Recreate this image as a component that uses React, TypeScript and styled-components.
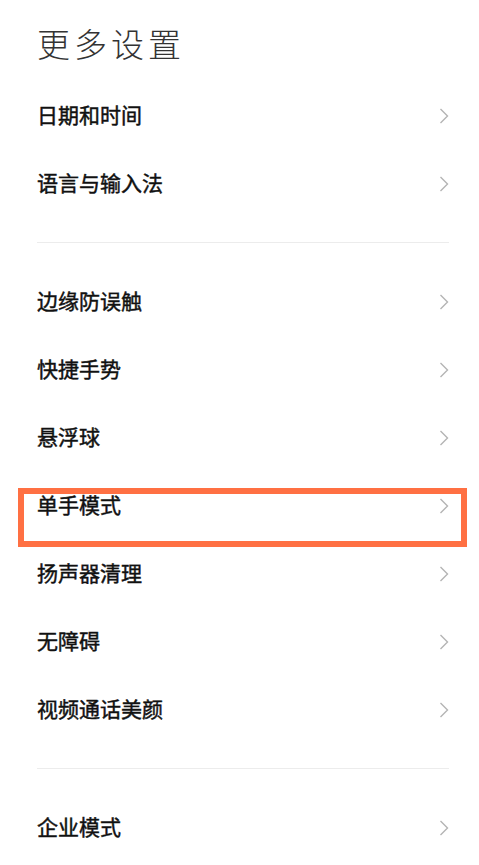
import styled, { createGlobalStyle } from 'styled-components';

const GlobalStyle = createGlobalStyle`
  html, body {
    margin: 0;
    padding: 0;
    background: #fff;
  }
  body {
    font-family: "Noto Sans CJK SC", "Noto Sans", sans-serif;
  }
`;

const Page = styled.div`
  width: 479px;
  height: 865px;
  overflow: hidden;
  padding: 0 30px 0 37px;
  box-sizing: border-box;
  background: #fff;
`;

const Title = styled.h1`
  margin: 0 0 21px;
  padding-top: 25px;
  font-size: 33px;
  line-height: 36px;
  font-weight: 300;
  letter-spacing: 4px;
  color: #333;
`;

const List = styled.ul`
  margin: 0;
  padding: 0;
  list-style: none;
`;

const Row = styled.li`
  position: relative;
  height: 68px;
  display: flex;
  align-items: center;
  justify-content: space-between;
`;

const Label = styled.span`
  font-size: 21px;
  line-height: 24px;
  padding-bottom: 4px;
  font-weight: 400;
  -webkit-text-stroke: 0.45px #111;
  color: #111;
`;

const Divider = styled.div`
  height: 1px;
  background: #ececec;
  margin: 24px 0 25px;
`;

const Highlight = styled.div`
  position: absolute;
  top: 16px;
  left: -19px;
  width: 449px;
  height: 59px;
  box-sizing: border-box;
  border: 6px solid #ff7043;
  pointer-events: none;
`;

const Chevron = () => (
  <svg width='10' height='16' viewBox='0 0 10 16' fill='none'>
    <path d='M1.5 1 L8.5 8 L1.5 15' stroke='#b4b4b4' strokeWidth='1.4' />
  </svg>
);

const sections = [
  ['日期和时间', '语言与输入法'],
  ['边缘防误触', '快捷手势', '悬浮球', '单手模式', '扬声器清理', '无障碍', '视频通话美颜'],
  ['企业模式'],
];

export default function App() {
  return (
    <>
      <GlobalStyle />
      <Page>
        <Title>更多设置</Title>
        {sections.map((items, i) => (
          <div key={i}>
            {i > 0 && <Divider />}
            <List>
              {items.map((label) => (
                <Row key={label}>
                  <Label>{label}</Label>
                  <Chevron />
                  {label === '单手模式' && <Highlight />}
                </Row>
              ))}
            </List>
          </div>
        ))}
      </Page>
    </>
  );
}
